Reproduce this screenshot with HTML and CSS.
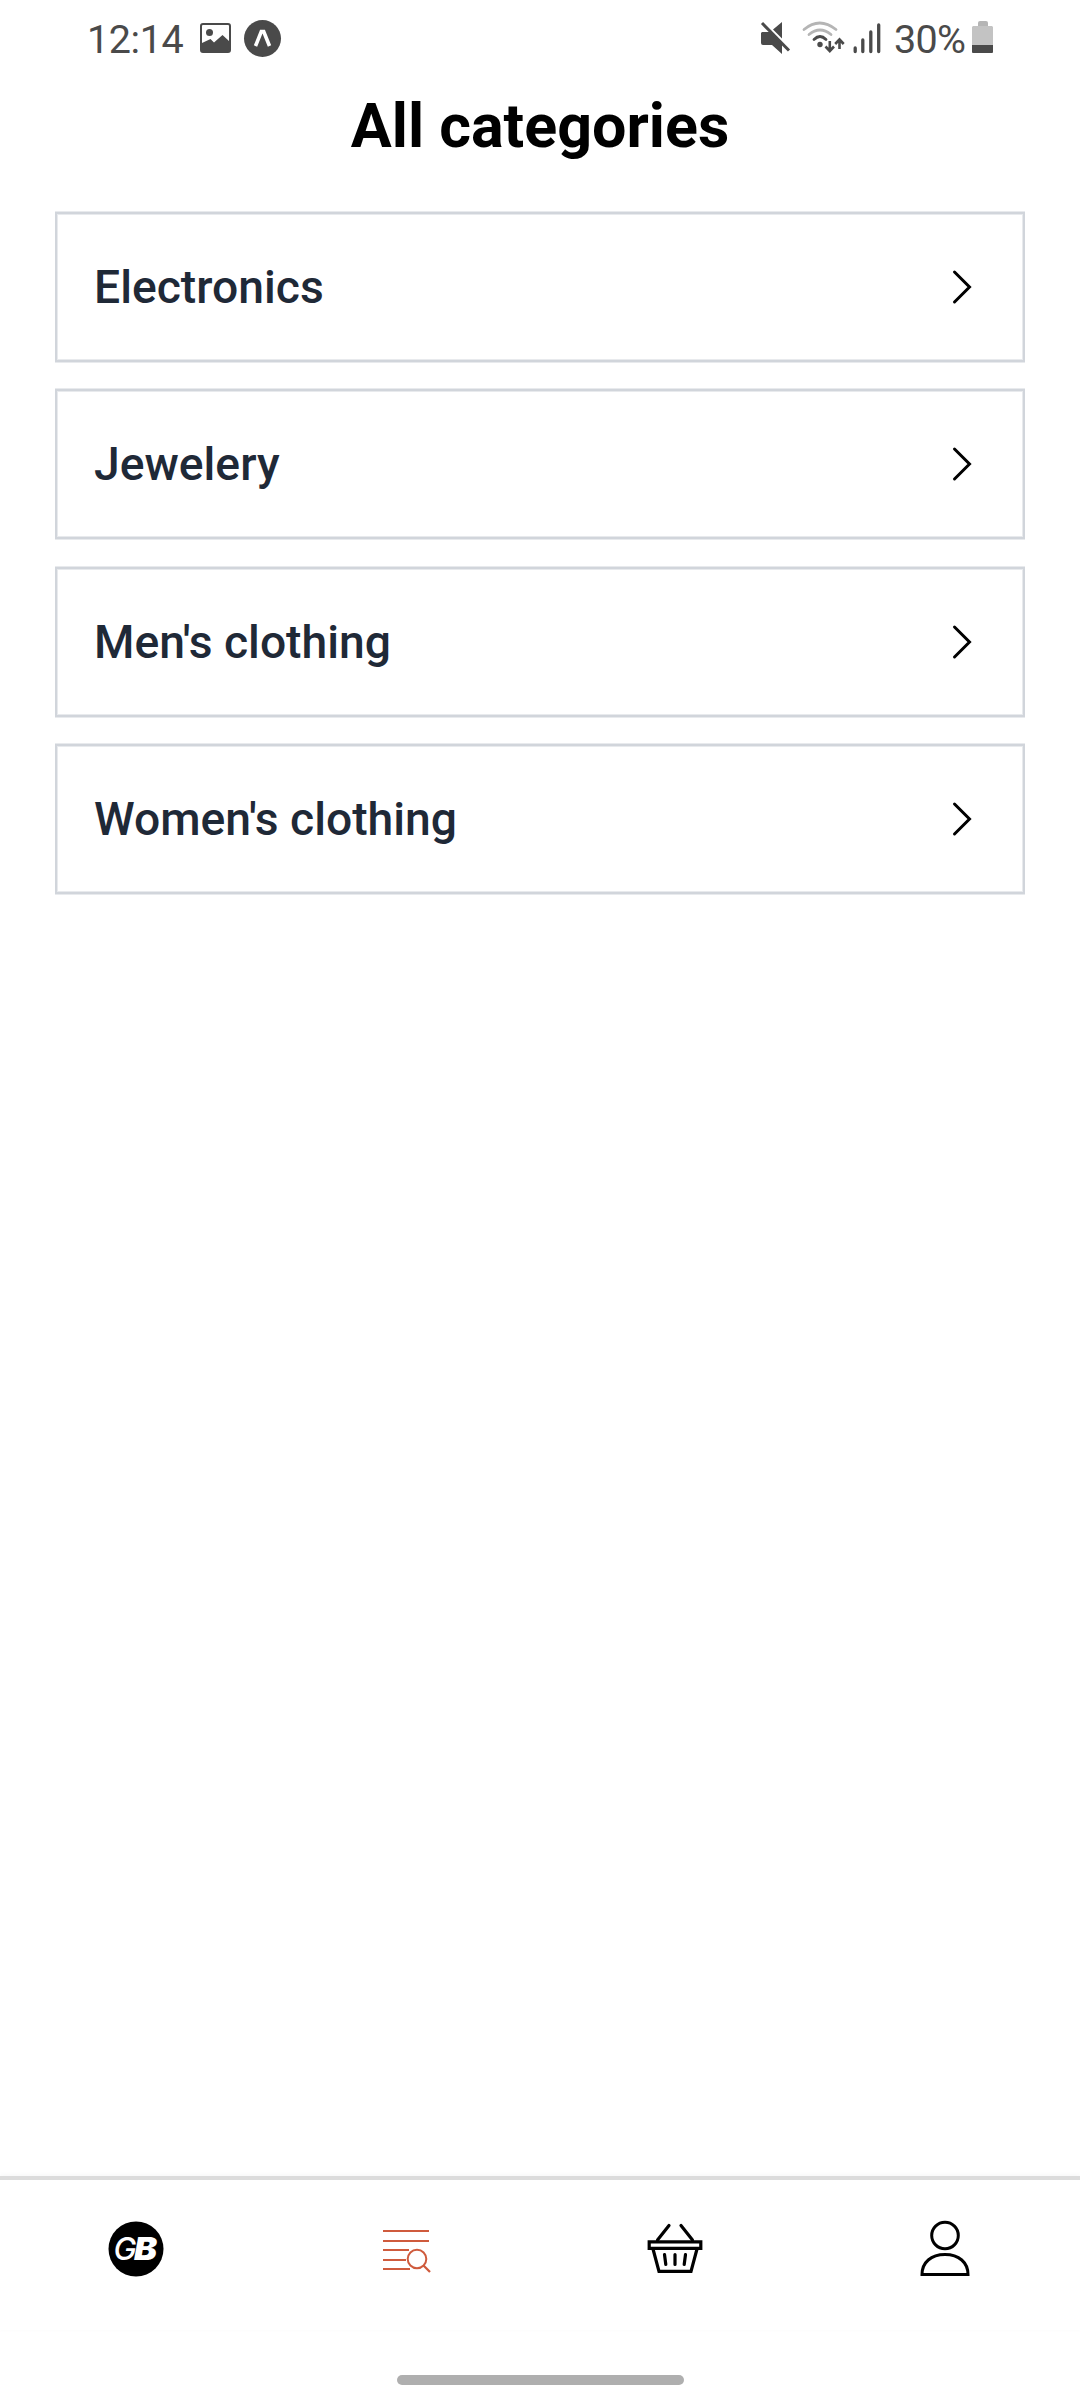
FILE: index.html
```html
<!DOCTYPE html>
<html lang="en">
<head>
<meta charset="utf-8">
<title>All categories</title>
<link rel="stylesheet" href="styles.css">
</head>
<body>
<div class="screen">
  <header class="status">
    <div class="status-left">
      <span class="time">12:14</span>
      <svg class="photo" width="31" height="30" viewBox="0 0 31 30"><rect x="1" y="1" width="29" height="28" rx="2" fill="none" stroke="currentColor" stroke-width="2"/><circle cx="9.5" cy="9.5" r="3.5"/><path d="M2 20L10.500 16L14 19.500L22.500 12L29 18V29H2Z"/></svg>
      <svg class="expo" width="37" height="37" viewBox="0 0 37 37"><circle cx="18.500" cy="18.500" r="18.500"/><path d="M11.500 26L17.300 11.500H19.700L25.500 26" fill="none" stroke="#fff" stroke-width="3.600"/></svg>
    </div>
    <div class="status-right">
      <svg class="mute" width="30" height="33" viewBox="0 0 30 33"><path d="M1 10H10L21 20.500V32L11 23H2Q0 23 0 21V11ZM12 7.500L21 0V16.500Z"/><path d="M1 1L28 28.500" stroke="currentColor" stroke-width="3"/></svg>
      <svg class="wifi" width="43" height="33" viewBox="0 0 43 33"><g fill="none" stroke-width="2.800" stroke-linecap="round"><path d="M2 8.500Q17.500-4.500 34 8.500M7 13.500Q18 4.500 29 13.500" stroke="#b5b5b5"/><path d="M12 18.500Q18 12.500 24 18.500" stroke="currentColor"/></g><circle cx="18" cy="23.500" r="2.700"/><path d="M27.800 20V29M23.500 25.500L27.800 30L32 25.500M37.500 28V19M33.200 23L37.500 18.500L41.700 23" fill="none" stroke="currentColor" stroke-width="2.600"/></svg>
      <svg class="signal" width="28" height="30" viewBox="0 0 28 30"><path d="M2.200 25V28.500M9.800 17V28.500M17.800 9V28.500M25.700 2V28.500" fill="none" stroke="currentColor" stroke-width="3.300" stroke-linecap="round"/></svg>
      <span class="percent">30%</span>
      <svg class="battery" width="21" height="33" viewBox="0 0 21 33"><path d="M6 6V2Q6 0 8 0H14Q16 0 16 2V6Z" fill="#b5b5b5"/><path d="M1 5H20L21 6V24H0V6Z" fill="#c3c3c3"/><path d="M0 24H21V31Q21 32 20 32H1Q0 32 0 31Z"/></svg>
    </div>
  </header>
  <h1 class="title">All categories</h1>
  <main class="categories">
    <a class="card"><span>Electronics</span><svg class="chevron" width="20" height="34" viewBox="0 0 20 34"><path d="M2.500 2L17.500 17L2.500 32"/></svg></a>
    <a class="card"><span>Jewelery</span><svg class="chevron" width="20" height="34" viewBox="0 0 20 34"><path d="M2.500 2L17.500 17L2.500 32"/></svg></a>
    <a class="card"><span>Men's clothing</span><svg class="chevron" width="20" height="34" viewBox="0 0 20 34"><path d="M2.500 2L17.500 17L2.500 32"/></svg></a>
    <a class="card"><span>Women's clothing</span><svg class="chevron" width="20" height="34" viewBox="0 0 20 34"><path d="M2.500 2L17.500 17L2.500 32"/></svg></a>
  </main>
  <nav class="tabs">
    <a class="tab"><svg width="56" height="56" viewBox="0 0 56 56"><circle cx="28" cy="28" r="27.500"/><g fill="#fff" font-family="Inter, sans-serif" font-style="italic" font-size="31"><text x="5.500" y="39" font-weight="500" textLength="23" lengthAdjust="spacingAndGlyphs">G</text><text x="26" y="39" font-weight="900" textLength="23" lengthAdjust="spacingAndGlyphs">B</text></g></svg></a>
    <a class="tab"><svg width="56" height="56" viewBox="0 0 56 56" fill="none" stroke="#cf5b3d" stroke-width="2"><path d="M5 10H51M5 20H51M5 29H31M5 39H28M5 48H32"/><circle cx="39" cy="38" r="9.300"/><path d="M45.500 44.500L52 51" stroke-width="2.300"/></svg></a>
    <a class="tab"><svg width="56" height="56" viewBox="0 0 56 56" fill="none" stroke="#000" stroke-width="3.200" stroke-linecap="round"><path d="M2.200 20.800H53.800V27.300H2.200Z"/><path d="M6 28L12 50.300H44L50 28M10.500 19L22 4.500M45.500 19L34 4.500M17.500 33.500L18.800 43.500M28 33.500V43.500M38.500 33.500L37.200 43.500"/></svg></a>
    <a class="tab"><svg width="56" height="56" viewBox="0 0 56 56" fill="none" stroke="#000" stroke-width="3"><ellipse cx="28" cy="14.500" rx="13.300" ry="13.300"/><path d="M5 53.500C5 41.500 14 33.500 28 33.500C42 33.500 51 41.500 51 53.500Z"/></svg></a>
  </nav>
  <footer class="gesture"><div class="handle"></div></footer>
</div>
</body>
</html>
```
FILE: styles.css
```css
* { box-sizing: border-box; }
body { margin: 0; background: #fff; font-family: Roboto, sans-serif; }
svg { display: block; flex: none; overflow: visible; }
.screen { width: 1080px; height: 2400px; display: flex; flex-direction: column; }
.status { height: 78px; display: flex; justify-content: space-between; padding: 0 87px; color: #4a4a4a; font-size: 39.5px; line-height: 80px; letter-spacing: -.4px; }
.status svg { fill: currentColor; }
.status-left, .status-right { display: flex; align-items: flex-start; }
.time { width: 113px; }
.photo { margin-top: 23px; }
.expo { margin: 20px 0 0 13px; }
.mute { margin-top: 22px; }
.wifi { margin: 21px 0 0 11px; }
.signal { margin: 23px 0 0 8px; }
.percent { margin-left: 13px; width: 78px; white-space: nowrap; letter-spacing: -.7px; }
.battery { margin-top: 21px; }
.title { margin: 0; height: 134px; padding-top: 12px; text-align: center; font-size: 61px; line-height: 72px; font-weight: 700; color: #000; }
.categories { flex: 1; padding: 0 55px; display: flex; flex-direction: column; gap: 27.333px; }
.card { height: 150px; display: flex; align-items: center; justify-content: space-between; padding: 0 51px 0 37px; border: 2px solid #d1d5db; box-shadow: inset 0 0 0 1px #e8eaed, 0 -1px #e8eaed, 0 1px #e8eaed; color: #1f2937; font-size: 46.25px; line-height: 54px; font-weight: 500; }
.chevron path { fill: none; stroke: #000; stroke-width: 3; stroke-linecap: round; }
.tabs { height: 154px; border-top: 4px solid #dcdcdc; box-shadow: 0 -1px 5px rgba(0, 0, 0, .04); display: grid; grid-template-columns: repeat(4, 1fr); justify-items: center; padding: 41px 0 0 1px; }
.gesture { height: 70px; display: flex; justify-content: center; padding-top: 45px; }
.handle { width: 287px; height: 10px; border-radius: 5px; background: #afafaf; }
```
